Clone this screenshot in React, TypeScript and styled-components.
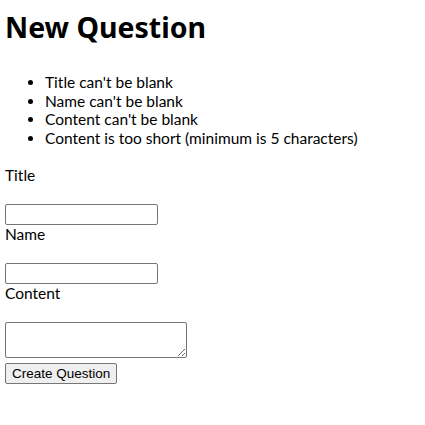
import React from 'react';
import styled, { createGlobalStyle } from 'styled-components';

const GlobalStyle = createGlobalStyle`
  html, body {
    margin: 0;
    background: #ffffff;
  }

  body {
    font-family: Lato, 'Noto Sans', sans-serif;
    color: #000000;
  }
`;

// Styles
const Page = styled.div`
  display: flex;
  flex-direction: column;
  align-items: flex-start;
  padding: 9px 5px 0;
`;

const Heading = styled.h1`
  margin: 0;
  font-family: 'Noto Sans', sans-serif;
  font-size: 28.5px;
  line-height: 37px;
  font-weight: 700;
`;

const ErrorList = styled.ul`
  margin: 27px 0 18px;
  padding-left: 40px;
  font-size: 15.5px;
  line-height: 18.67px;
  list-style: disc;
`;

const Field = styled.div`
  display: flex;
  flex-direction: column;
  align-items: flex-start;
`;

const Label = styled.label`
  font-size: 15.5px;
  line-height: 19px;
  margin-bottom: 19px;
`;

const TextInput = styled.input`
  box-sizing: border-box;
  width: 153px;
  height: 21px;
  margin: 0;
  padding: 1px 2px;
  border: 1px solid #767676;
  border-radius: 2px;
  font: 13.33px 'Liberation Sans', Arial, sans-serif;
`;

const TextArea = styled.textarea`
  box-sizing: border-box;
  width: 182px;
  height: 36px;
  margin: 0 0 5px;
  padding: 2px;
  border: 1px solid #767676;
  border-radius: 2px;
  font: 13.33px 'Liberation Mono', monospace;
  resize: vertical;
`;

const SubmitButton = styled.button`
  box-sizing: border-box;
  height: 21px;
  margin: 0;
  padding: 1px 6px;
  border: 1px solid #767676;
  border-radius: 2px;
  background: #efefef;
  color: #000000;
  font: 13.5px 'Liberation Sans', Arial, sans-serif;
`;

// Data
const errors = [
  "Title can't be blank",
  "Name can't be blank",
  "Content can't be blank",
  'Content is too short (minimum is 5 characters)',
];

// Component
const App = () => (
  <>
    <GlobalStyle />
    <Page>
      <Heading>New Question</Heading>
      <ErrorList>
        {errors.map((error) => (
          <li key={error}>{error}</li>
        ))}
      </ErrorList>
      <Field>
        <Label htmlFor="question_title">Title</Label>
        <TextInput id="question_title" type="text" />
      </Field>
      <Field>
        <Label htmlFor="question_name">Name</Label>
        <TextInput id="question_name" type="text" />
      </Field>
      <Field>
        <Label htmlFor="question_content">Content</Label>
        <TextArea id="question_content" />
      </Field>
      <SubmitButton type="submit">Create Question</SubmitButton>
    </Page>
  </>
);

export default App;
